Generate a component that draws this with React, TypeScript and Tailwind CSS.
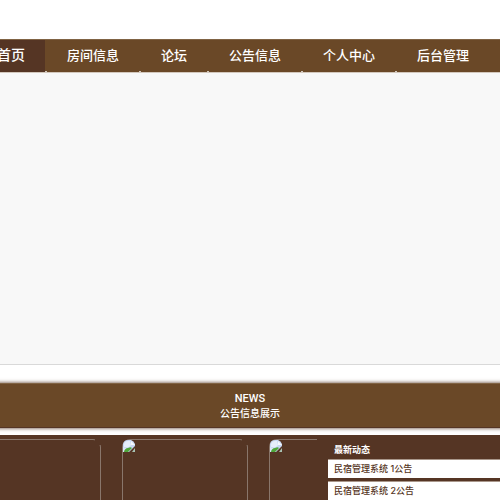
import clsx from 'clsx';

const navItems = ['房间信息', '论坛', '公告信息', '个人中心', '后台管理'];

const notices = [
  { id: 1, title: '民宿管理系统 1公告' },
  { id: 2, title: '民宿管理系统 2公告' },
];

const rooms = [
  { id: 1, className: 'w-[101px] rounded-r-lg border-y border-r' },
  { id: 2, className: 'w-[126px] rounded-lg border' },
  { id: 3, className: 'min-w-0 flex-1 rounded-tl-lg border-t border-l' },
];

function MissingImage() {
  return (
    <svg className="block size-3" viewBox="0 0 12 12" aria-hidden="true">
      <path d="M0 4Q1 0 5 0h3q3 1 4 4v2l-6 6H0z" fill="#c8d8f3" />
      <path d="M1 4q1-3 4-3h2l1 4-2 2H1z" fill="#e6eefb" />
      <path d="M0 7l2 1 3-1-4 5H0z" fill="#dbe6f7" />
      <path d="M1 12c0-2 2-4 4-4 2-1 3-1 4 0l-4 4z" fill="#4fa63a" />
      <path d="M8 1l4 4H8z" fill="#f6f9fe" />
      <path d="M9 12l3-4v4z" fill="#a9c3b4" />
    </svg>
  );
}

function NavBar() {
  return (
    <nav className="flex h-[34px] shrink-0 gap-0.5 overflow-hidden border-t border-b border-t-[#806344] border-b-[#d3c8bd] bg-[#6a4827] text-[13px] font-medium whitespace-nowrap text-white">
      <a
        href="#home"
        className="flex w-[45px] shrink-0 justify-end bg-[#553524] pr-5 text-sm leading-[30px]"
      >
        首页
      </a>
      {navItems.map((item) => (
        <a
          key={item}
          href={`#${item}`}
          className="relative shrink-0 px-5 leading-[30px] before:absolute before:bottom-0 before:-left-0.5 before:h-px before:w-0.5 before:bg-[#d3c8bd]"
        >
          {item}
        </a>
      ))}
    </nav>
  );
}

export default function App() {
  return (
    <div className="flex h-screen flex-col overflow-hidden bg-white pt-[39px] font-[Inter,'Noto_Sans_CJK_SC',sans-serif]">
      <NavBar />
      <main className="flex min-h-0 flex-1 flex-col">
        <div className="h-[292px] shrink-0 border-b border-[#d9d9d9] bg-[#f8f8f8]" />
        <header className="-mx-2 mt-[18px] mb-[7px] flex h-[45px] shrink-0 flex-col items-center border-y border-t-[#806344] border-b-[#553524] bg-[#6a4827] pt-2 text-white shadow-[0_0_4px_#553524]">
          <p className="font-[Roboto,sans-serif] text-[11px] leading-[14px] font-medium">
            NEWS
          </p>
          <h2 className="text-[10px] leading-[14px] font-medium">
            公告信息展示
          </h2>
        </header>
        <div className="flex min-h-0 flex-1 bg-[#553524]">
          <section className="flex min-w-0 flex-1 gap-[21px] overflow-hidden pt-1">
            {rooms.map((room) => (
              <div
                key={room.id}
                className={clsx(
                  'relative h-[120px] shrink-0 border-[#89766b] after:absolute after:-top-px after:-right-px after:size-1.5 after:bg-[#553524]',
                  room.className,
                )}
              >
                {room.id > 1 && <MissingImage />}
              </div>
            ))}
          </section>
          <aside className="w-[178px] shrink-0 pt-2 pl-1.5 text-[9px]">
            <h3 className="mb-0.5 pl-1.5 leading-[14px] font-bold text-white">
              最新动态
            </h3>
            <ul className="flex flex-col gap-[3px]">
              {notices.map((notice) => (
                <li
                  key={notice.id}
                  className="border-t border-[#a9978b] bg-white pl-1.5 leading-[18px] font-medium text-[#553524]"
                >
                  <a href={`#notice-${notice.id}`}>{notice.title}</a>
                </li>
              ))}
            </ul>
          </aside>
        </div>
      </main>
    </div>
  );
}
